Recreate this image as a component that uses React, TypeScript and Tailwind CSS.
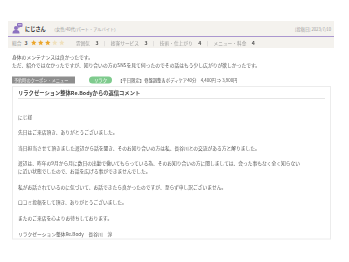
import React from 'react';

const font = { fontFamily: '"Noto Sans CJK JP", "Noto Sans", sans-serif' };

// The page is laid out at 2x and scaled down: the browser clamps text below 6px.

function UserIcon() {
  return (
    <svg width="22" height="22" viewBox="0 0 22 22" className="shrink-0">
      <rect x="10" y="0" width="11" height="8" rx="2" fill="#8d72c0" />
      <path d="M13 8 L12 11 L16 8 Z" fill="#8d72c0" />
      <rect x="12" y="3" width="7" height="1.4" fill="#fff" />
      <circle cx="8" cy="10" r="4" fill="#8d72c0" />
      <path d="M1 21 C1 15 4 14 8 14 C12 14 15 15 15 21 Z" fill="#8d72c0" />
    </svg>
  );
}

function Star({ on }: { on: boolean }) {
  return (
    <svg width="13" height="13" viewBox="0 0 24 24">
      <path
        d="M12 2 L14.9 8.6 L22 9.3 L16.6 14 L18.2 21 L12 17.3 L5.8 21 L7.4 14 L2 9.3 L9.1 8.6 Z"
        fill={on ? '#eba52a' : '#efe0bd'}
      />
    </svg>
  );
}

const ratings = [
  { label: '雰囲気', score: 3 },
  { label: '接客サービス', score: 3 },
  { label: '技術・仕上がり', score: 4 },
  { label: 'メニュー・料金', score: 4 },
];

const reply = [
  ['にじ様'],
  ['先日はご来店頂き、ありがとうございました。'],
  ['当日担当させて頂きました渡辺から話を聞き、そのお知り合いの方は私、長谷川との交流がある方と解りました。'],
  ['渡辺は、昨年の9月から月に数日の出勤で働いてもらっている為、そのお知り合いの方に関しましては、会った事もなく全く知らない', 'に近い状態でしたので、お話を広げる事ができませんでした。'],
  ['私がお話されているのに気づいて、お話できたら良かったのですが、至らず申し訳ございません。'],
  ['口コミ投稿をして頂き、ありがとうございました。'],
  ['またのご来店を心よりお待ちしております。'],
  ['リラクゼーション整体Re.Body　長谷川　淳'],
];

export default function App() {
  return (
    <div className="w-[349px] h-[262px] bg-white overflow-hidden">
      <div className="w-[698px] h-[524px] scale-50 origin-top-left pt-[42px] text-[#555]" style={font}>
        <div className="ml-[16px] w-[652px]">
          <div className="h-[32px] bg-[#f4f2ee] border-b-2 border-[#ab97cf] flex items-center pl-[8px] pr-[6px]">
            <UserIcon />
            <span className="ml-[4px] text-[10.4px] font-bold text-[#333]">にじさん</span>
            <span className="ml-[12px] text-[8.4px] text-[#999]">（女性/40代/パート・アルバイト）</span>
            <span className="ml-auto text-[8.4px] text-[#999]">[投稿日] 2023/7/10</span>
          </div>
          <div className="h-[22px] bg-[#f4f2ee] flex items-center pl-[8px] text-[9.4px] text-[#999]">
            <span>総合</span>
            <span className="ml-[6px] text-[10.4px] font-bold text-[#555]">3</span>
            <div className="ml-[6px] flex gap-[1px]">
              {[0, 1, 2, 3, 4].map((i) => (
                <Star key={i} on={i < 3} />
              ))}
            </div>
            {ratings.map((r, i) => (
              <div key={r.label} className={`flex items-center ${i === 0 ? 'ml-[22px]' : ''}`}>
                <span>{r.label}</span>
                <span className="ml-[11px] text-[10.4px] font-bold text-[#555]">{r.score}</span>
                {i < ratings.length - 1 && <span className="mx-[11px] text-[#bbb]">|</span>}
              </div>
            ))}
          </div>
        </div>

        <div className="mt-[10px] ml-[24px] text-[9.6px] leading-[16px]">
          <p>身体のメンテナンスは良かったです。</p>
          <p>ただ、紹介ではなかったですが、知り合いの方のSNSを見て伺ったのでその話はもう少し広がりが欲しかったです。</p>
        </div>

        <div className="mt-[14px] ml-[24px] flex items-center h-[16px]">
          <span className="bg-[#8e8e8e] text-[#f2f2f2] text-[8.4px] leading-[14px] px-[4px] w-[126px]">予約時のクーポン・メニュー</span>
          <span className="ml-[28px] bg-[#7fcb8e] text-white text-[8.8px] leading-[14px] rounded-full w-[46px] text-center">リラク</span>
          <span className="ml-[12px] text-[8.7px]">【平日限定】骨盤調整＆ボディケア40分　4,400円 ⇒ 3,900円</span>
        </div>

        <div className="mt-[4px] ml-[24px] w-[638px] border-2 border-[#ececec] px-[10px] pt-[2px] pb-[2px] text-[9.5px] leading-[15.6px]">
          <div className="border-b-2 border-[#e6e6e6] py-[2px] text-[10.6px] font-bold text-[#444]">
            リラクゼーション整体Re.Bodyからの返信コメント
          </div>
          <div className="mt-[28px]">
            {reply.map((p, i) => (
              <div key={i} className={i < reply.length - 1 ? 'mb-[15.6px]' : ''}>
                {p.map((l) => (
                  <div key={l}>{l}</div>
                ))}
              </div>
            ))}
          </div>
        </div>
      </div>
    </div>
  );
}
